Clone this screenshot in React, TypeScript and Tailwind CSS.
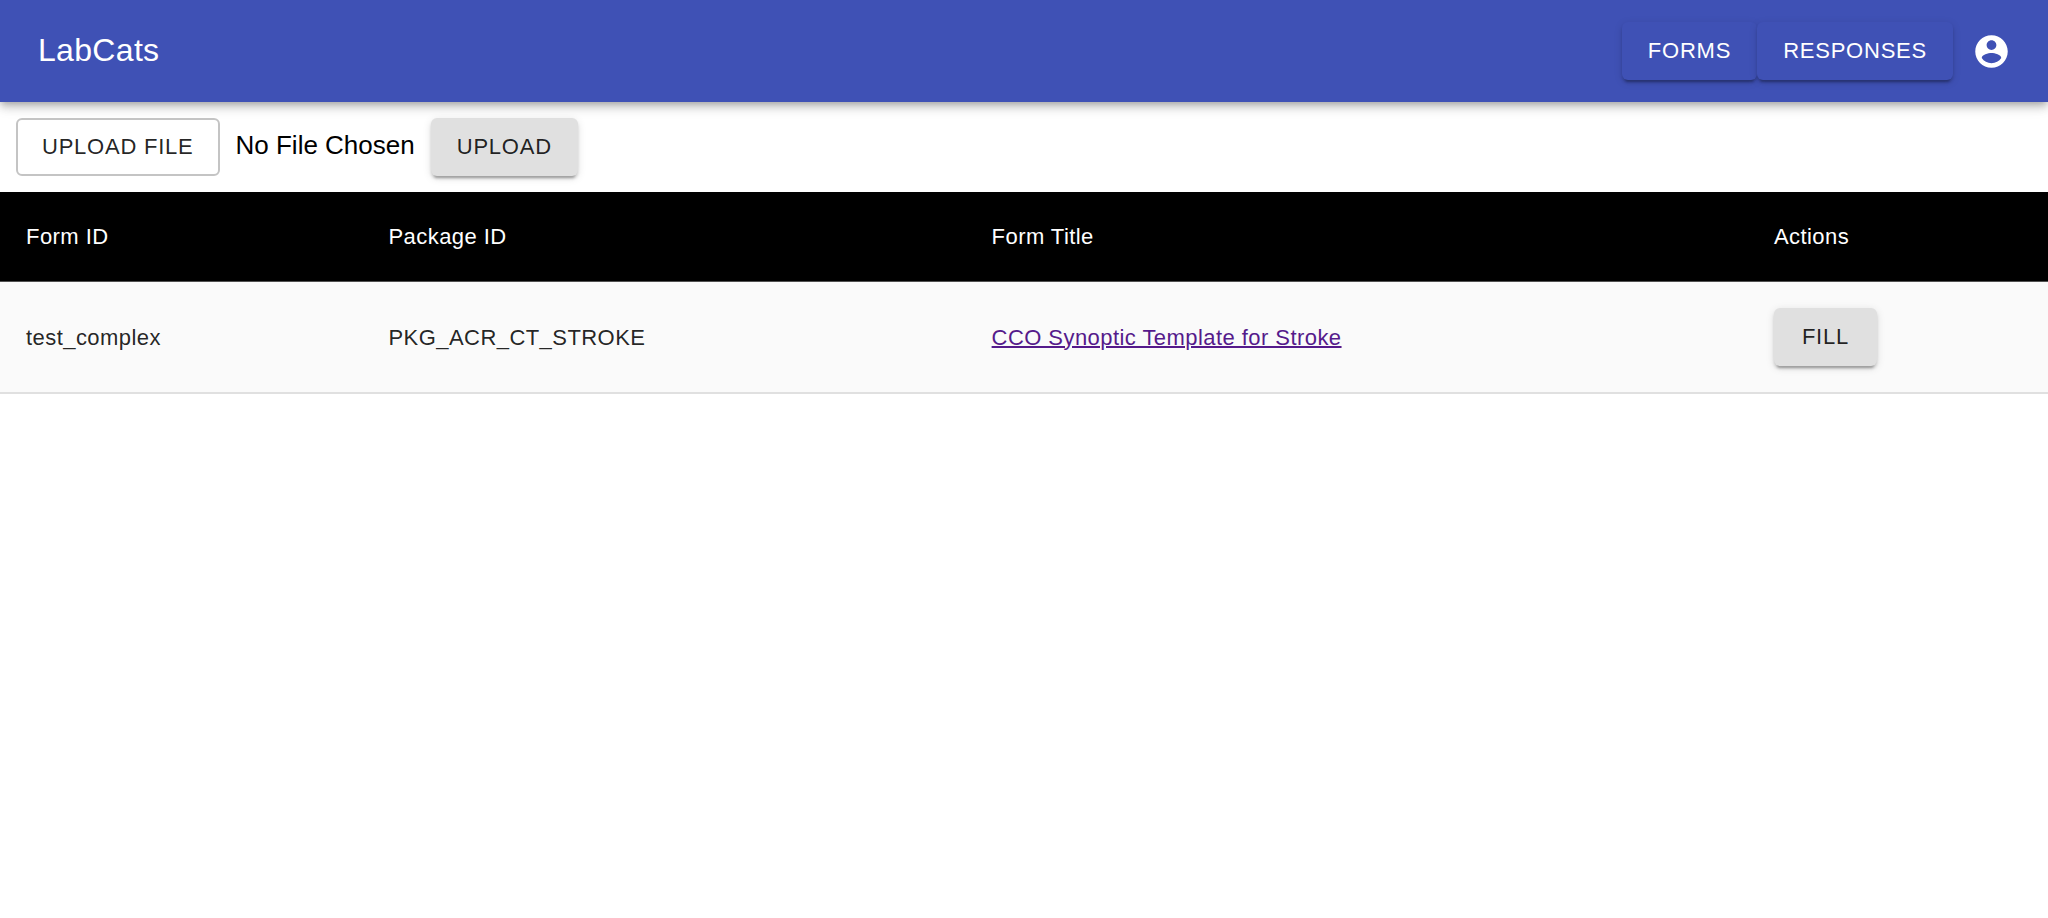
import { useState } from "react";
import type { ButtonHTMLAttributes } from "react";

type Form = { id: string; packageId: string; title: string };

const forms: Form[] = [
  {
    id: "test_complex",
    packageId: "PKG_ACR_CT_STROKE",
    title: "CCO Synoptic Template for Stroke",
  },
];

const buttonText = "text-[22px] leading-[38px] tracking-[0.035em] uppercase";
const buttonBase = `cursor-pointer rounded-md px-[26px] py-[10px] min-w-[103px] ${buttonText}`;
const raised =
  "shadow-[0_5px_2px_-3px_rgba(0,0,0,0.2),0_3px_3px_0_rgba(0,0,0,0.14),0_2px_8px_0_rgba(0,0,0,0.12)]";
const headCell = "border-b border-[#515151] px-[26px] py-[26px] font-normal";
const bodyCell = "border-b-2 border-[#e0e0e0] px-[26px] py-[26px]";

function NavButton(props: ButtonHTMLAttributes<HTMLButtonElement>) {
  return <button type="button" className={`${buttonBase} ${raised} bg-[#3f51b5] text-white`} {...props} />;
}

function GreyButton(props: ButtonHTMLAttributes<HTMLButtonElement>) {
  return <button type="button" className={`${buttonBase} ${raised} bg-[#e0e0e0] text-black/87`} {...props} />;
}

function AccountIcon() {
  return (
    <svg viewBox="0 0 24 24" className="size-[39px] fill-current" aria-hidden="true">
      <path d="M12 2C6.48 2 2 6.48 2 12s4.48 10 10 10 10-4.48 10-10S17.52 2 12 2zm0 3c1.66 0 3 1.34 3 3s-1.34 3-3 3-3-1.34-3-3 1.34-3 3-3zm0 14.2c-2.5 0-4.71-1.28-6-3.22.03-1.99 4-3.08 6-3.08 1.99 0 5.97 1.09 6 3.08-1.29 1.94-3.5 3.22-6 3.22z" />
    </svg>
  );
}

function Header() {
  return (
    <header className="relative flex min-h-[102px] items-center bg-[#3f51b5] pr-[18px] pl-[38px] text-white shadow-[0_3px_6px_-2px_rgba(0,0,0,0.2),0_6px_8px_0_rgba(0,0,0,0.14),0_2px_16px_0_rgba(0,0,0,0.12)]">
      <h1 className="grow pb-0.5 text-[32px] leading-[52px] tracking-[0.01em]">LabCats</h1>
      <nav className="flex">
        <NavButton>Forms</NavButton>
        <NavButton>Responses</NavButton>
      </nav>
      <button type="button" aria-label="Account" className="cursor-pointer rounded-full p-[19px]">
        <AccountIcon />
      </button>
    </header>
  );
}

function UploadBar() {
  const [fileName, setFileName] = useState("No File Chosen");
  return (
    <form className="flex items-center gap-4 p-4">
      <label className={`relative cursor-pointer rounded-md border-2 border-[#c4c4c4] px-6 py-2 text-black/87 ${buttonText}`}>
        Upload File
        <input
          type="file"
          className="sr-only"
          onChange={(e) => setFileName(e.target.files?.[0]?.name ?? "No File Chosen")}
        />
      </label>
      <span className="pb-1 text-[26px] leading-[38px] text-black">{fileName}</span>
      <GreyButton>Upload</GreyButton>
    </form>
  );
}

function FormsTable() {
  return (
    <table className="w-full table-fixed border-separate border-spacing-0 text-left text-[22px] leading-[37px] tracking-[0.02em]">
      <colgroup>
        <col className="w-[17.7%]" />
        <col className="w-[29.45%]" />
        <col className="w-[38.2%]" />
        <col />
      </colgroup>
      <thead className="bg-black text-white">
        <tr>
          <th className={headCell}>Form ID</th>
          <th className={headCell}>Package ID</th>
          <th className={headCell}>Form Title</th>
          <th className={headCell}>Actions</th>
        </tr>
      </thead>
      <tbody>
        {forms.map((form) => (
          <tr key={form.id} className="bg-[#fafafa] text-black/87">
            <td className={bodyCell}>{form.id}</td>
            <td className={bodyCell}>{form.packageId}</td>
            <td className={bodyCell}>
              <a href="#form" className="text-[#551a8b] underline decoration-2">
                {form.title}
              </a>
            </td>
            <td className={bodyCell}>
              <div className="flex">
                <GreyButton>Fill</GreyButton>
              </div>
            </td>
          </tr>
        ))}
      </tbody>
    </table>
  );
}

export default function App() {
  return (
    <div className="min-h-screen bg-white font-['Liberation_Sans',Arial,sans-serif]">
      <Header />
      <main>
        <UploadBar />
        <FormsTable />
      </main>
    </div>
  );
}
